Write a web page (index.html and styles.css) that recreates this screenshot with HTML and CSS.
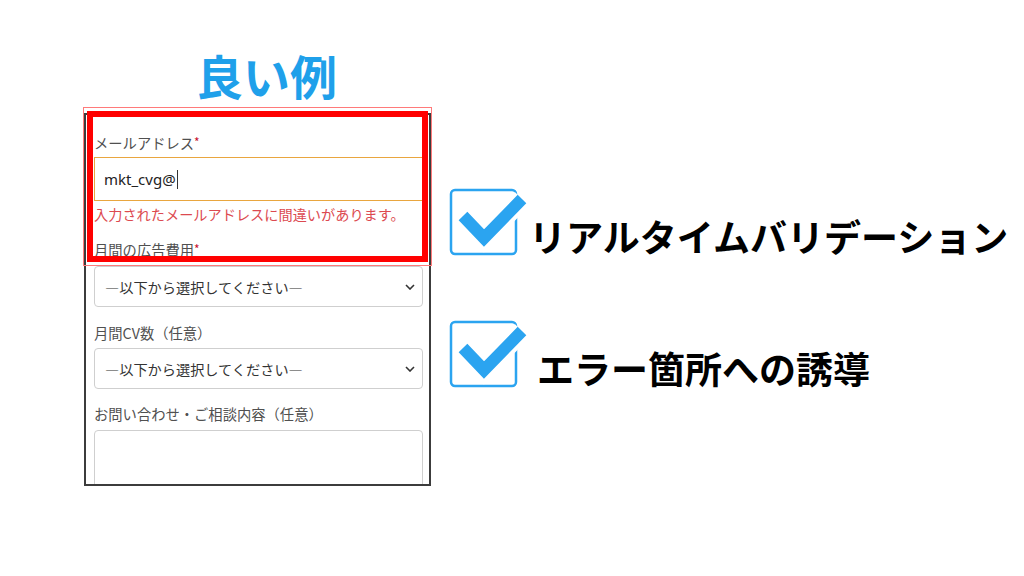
FILE: index.html
```html
<!DOCTYPE html>
<html lang="ja">
<head>
<meta charset="utf-8">
<link rel="stylesheet" href="styles.css">
</head>
<body>
<div class="page">
  <div class="left">
    <h1 class="title">良い例</h1>
    <div class="form-area">
      <div class="frame">
        <div class="label label-first">メールアドレス<span class="req">*</span></div>
        <div class="input">mkt_cvg@<span class="caret"></span></div>
        <div class="error">入力されたメールアドレスに間違いがあります。</div>
        <div class="label label-gap">月間の広告費用<span class="req">*</span></div>
        <div class="select select-a"><span>—以下から選択してください—</span>
          <svg class="chev" width="10" height="6" viewBox="0 0 10 6"><polyline points="1,1 5,5 9,1" fill="none" stroke="#333" stroke-width="1.6"/></svg>
        </div>
        <div class="label label-gap">月間CV数（任意）</div>
        <div class="select select-b"><span>—以下から選択してください—</span>
          <svg class="chev" width="10" height="6" viewBox="0 0 10 6"><polyline points="1,1 5,5 9,1" fill="none" stroke="#333" stroke-width="1.6"/></svg>
        </div>
        <div class="label label-gap2">お問い合わせ・ご相談内容（任意）</div>
        <div class="textarea"></div>
      </div>
      <div class="highlight"></div>
    </div>
  </div>
  <div class="right">
    <div class="item">
      <svg class="check" width="78" height="68" viewBox="0 0 78 68">
        <rect x="4" y="2" width="65" height="64" rx="4" fill="none" stroke="#2ba4f0" stroke-width="2.5"/>
        <polyline points="16,28 37,50 75,11" fill="none" stroke="#fff" stroke-width="20"/>
        <polyline points="16,28 37,50 75,11" fill="none" stroke="#2ba4f0" stroke-width="12"/>
      </svg>
      <div class="feature">リアルタイムバリデーション</div>
    </div>
    <div class="item item-second">
      <svg class="check" width="78" height="68" viewBox="0 0 78 68">
        <rect x="4" y="2" width="65" height="64" rx="4" fill="none" stroke="#2ba4f0" stroke-width="2.5"/>
        <polyline points="16,28 37,50 75,11" fill="none" stroke="#fff" stroke-width="20"/>
        <polyline points="16,28 37,50 75,11" fill="none" stroke="#2ba4f0" stroke-width="12"/>
      </svg>
      <div class="feature feature-indent">エラー箇所への誘導</div>
    </div>
  </div>
</div>
</body>
</html>
```

FILE: styles.css
```css
html, body {
  margin: 0;
  padding: 0;
  background: #fff;
}
body {
  width: 1024px;
  height: 576px;
  overflow: hidden;
  font-family: "Noto Sans CJK JP", "Noto Sans", sans-serif;
}
.page {
  display: flex;
  align-items: flex-start;
  padding: 45px 0 0 84px;
}
.left {
  width: 347px;
  flex: none;
}
.title {
  margin: 0;
  height: 60px;
  line-height: 60px;
  font-size: 47px;
  font-weight: 700;
  color: #1fa0ea;
  text-align: center;
  padding-left: 18px;
}
.form-area {
  position: relative;
  margin-top: 8px;
}
.frame {
  box-sizing: border-box;
  width: 347px;
  height: 373px;
  border: 2px solid #3c3c3c;
  padding: 18px 6px 0 8px;
  overflow: hidden;
}
.label {
  font-size: 14.3px;
  line-height: 20px;
  height: 20px;
  color: #505050;
  white-space: nowrap;
}
.req {
  color: #c8102e;
  font-size: 12px;
  vertical-align: top;
  line-height: 18px;
}
.label-gap { margin-top: 16px; }
.label-gap2 { margin-top: 15px; }
.input {
  box-sizing: border-box;
  margin-top: 4px;
  height: 44px;
  border: 1px solid #e9a63f;
  padding-left: 9px;
  display: flex;
  align-items: center;
  font-family: "Noto Sans", "Noto Sans CJK JP", sans-serif;
  font-size: 15px;
  color: #222;
}
.caret {
  display: inline-block;
  width: 0;
  height: 19px;
  border-left: 1px solid #333;
  margin-left: 1px;
}
.error {
  margin-top: 3px;
  font-size: 14.2px;
  line-height: 20px;
  color: #dc4a50;
  white-space: nowrap;
}
.select {
  box-sizing: border-box;
  height: 41px;
  border: 1px solid #cfcfcf;
  border-radius: 4px;
  display: flex;
  align-items: center;
  justify-content: space-between;
  padding: 0 7px 0 10px;
  font-size: 14.2px;
  color: #333;
}
.select-a { margin-top: 6px; }
.select-b { margin-top: 5px; }
.chev { display: block; }
.textarea {
  box-sizing: border-box;
  margin-top: 6px;
  height: 90px;
  border: 1px solid #cfcfcf;
  border-radius: 4px;
}
.highlight {
  position: absolute;
  left: 3px;
  top: -2px;
  width: 341px;
  height: 151px;
  box-sizing: border-box;
  border: 6px solid #f00;
  outline: 1px solid #ff7a7a;
  outline-offset: 3px;
}
.right {
  margin-top: 143px;
  margin-left: 16px;
  display: flex;
  flex-direction: column;
  gap: 64px;
}
.item {
  display: flex;
  align-items: flex-start;
  height: 68px;
}
.check {
  flex: none;
  display: block;
  overflow: visible;
}
.feature {
  margin-top: 26px;
  margin-left: 4px;
  font-size: 37px;
  line-height: 44px;
  font-weight: 700;
  color: #000;
  white-space: nowrap;
}
.feature-indent {
  margin-left: 12px;
}
```
